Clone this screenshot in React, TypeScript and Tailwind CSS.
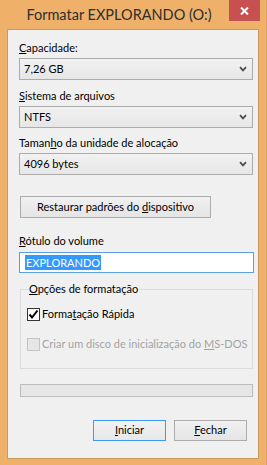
import React from 'react';

function Chevron() {
  return (
    <svg width="8" height="6" viewBox="0 0 8 6" className="shrink-0">
      <path d="M1 1.2 L4 4.4 L7 1.2" stroke="#4d4d4d" strokeWidth="1.7" fill="none" />
    </svg>
  );
}

function Combo({ value }: { value: string }) {
  return (
    <div className="mt-[2px] h-[22px] w-[234px] flex items-center justify-between pl-[4px] pr-[5px] border border-[#acacac] bg-linear-to-b from-[#f2f2f2] to-[#e6e6e6]">
      <span>{value}</span>
      <Chevron />
    </div>
  );
}

function Label({ children, mt }: { children: React.ReactNode; mt: string }) {
  return <div className={`${mt} h-[16px] leading-[16px]`}>{children}</div>;
}

export default function App() {
  return (
    <div className="w-[267px] h-[465px] bg-[#efb16a] flex flex-col font-['Lato','Liberation_Sans',sans-serif] text-[11px] text-black whitespace-nowrap border-r border-[#d9a15c]">
      {/* barra de título */}
      <div className="h-[29px] flex items-start shrink-0">
        <div className="flex-1 text-center pl-[9px] pt-[5px] text-[14.5px] leading-[20px] text-[#2e2e2e]">
          Formatar EXPLORANDO (O:)
        </div>
        <div className="w-[31px] h-[21px] mr-[6px] bg-[#c75050] flex items-center justify-center">
          <svg width="9" height="8" viewBox="0 0 9 8">
            <path d="M1 0.5 L8 7.5 M8 0.5 L1 7.5" stroke="#fff" strokeWidth="2" />
          </svg>
        </div>
      </div>

      {/* área do cliente */}
      <div className="mx-[7px] h-[430px] shrink-0 border border-[#c99b5e] bg-[#f0f0f0] flex flex-col pl-[11px] pr-[5px]">
        <Label mt="mt-[10px]">
          <span className="underline">C</span>apacidade:
        </Label>
        <Combo value="7,26 GB" />

        <Label mt="mt-[8px]">
          <span className="underline">S</span>istema de arquivos
        </Label>
        <Combo value="NTFS" />

        <Label mt="mt-[7px]">
          Taman<span className="underline">h</span>o da unidade de alocação
        </Label>
        <Combo value="4096 bytes" />

        <button className="mt-[21px] ml-[1px] w-[191px] h-[22px] border border-[#acacac] bg-linear-to-b from-[#f0f0f0] to-[#e5e5e5] text-center">
          Restaurar padrões do <span className="underline">d</span>ispositivo
        </button>

        <Label mt="mt-[15px]">
          <span className="underline">R</span>ótulo do volume
        </Label>
        <div className="mt-[3px] h-[21px] w-[235px] border border-[#5a9fe6] bg-white flex items-center pl-[5px]">
          <span className="bg-[#3399ff] text-white leading-[15px] px-[1px]">EXPLORANDO</span>
        </div>

        {/* grupo de opções */}
        <fieldset className="mt-[8px] ml-[1px] w-[233px] h-[88px] border border-[#dcdcdc] pl-[6px]">
          <legend className="ml-[1px] px-[1px] h-[16px] leading-[16px]">
            <span className="underline">O</span>pções de formatação
          </legend>
          <div className="mt-[11px] flex items-center h-[13px] gap-[2px]">
            <div className="w-[13px] h-[13px] border border-[#333] bg-white flex items-center justify-center">
              <svg width="11" height="11" viewBox="0 0 11 11">
                <path d="M1.5 5.5 L4 8.5 L9.5 1.5" stroke="#000" strokeWidth="2" fill="none" />
              </svg>
            </div>
            <span>
              Forma<span className="underline">t</span>ação Rápida
            </span>
          </div>
          <div className="mt-[17px] flex items-center h-[13px] gap-[2px] text-[#a3a3a3]">
            <div className="w-[13px] h-[13px] border border-[#c4c4c4] bg-[#e6e6e6]" />
            <span>
              Criar um disco de inicialização do <span className="underline">M</span>S-DOS
            </span>
          </div>
        </fieldset>

        <div className="mt-[15px] ml-[1px] w-[233px] h-[13px] border border-[#bcbcbc] bg-[#e6e6e6]" />

        <div className="mt-[23px] pl-[74px] flex gap-[8px]">
          <button className="w-[73px] h-[21px] border border-[#3c9af5] bg-linear-to-b from-[#f2f2f2] to-[#e8e8e8]">
            <span className="underline">I</span>niciar
          </button>
          <button className="w-[73px] h-[21px] border border-[#acacac] bg-linear-to-b from-[#f0f0f0] to-[#e5e5e5]">
            <span className="underline">F</span>echar
          </button>
        </div>
      </div>
    </div>
  );
}
